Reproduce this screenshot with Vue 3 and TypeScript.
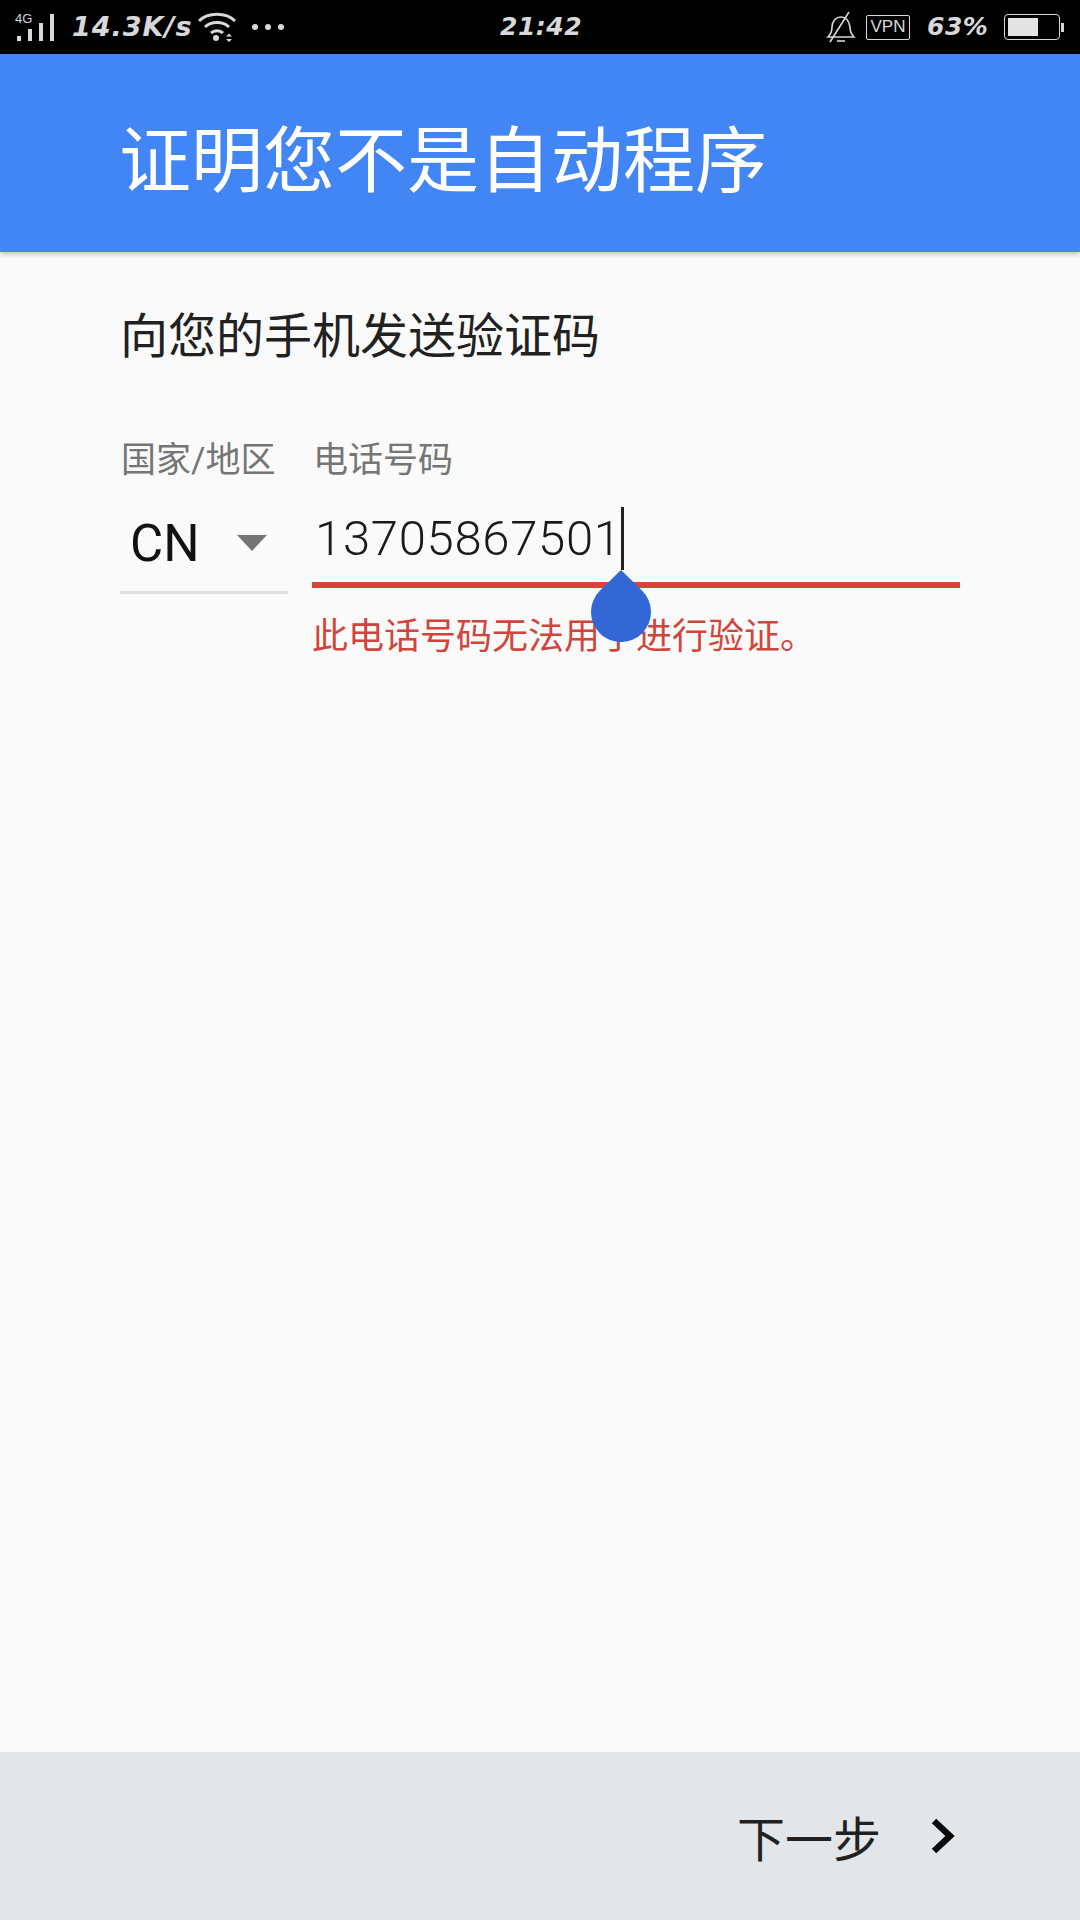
<script setup lang="ts">
const phone = "13705867501";
const signalBars = [5, 12, 18, 27];
</script>

<template>
  <div class="page">
    <div class="status">
      <div class="status-left">
        <div class="signal">
          <span class="net">4G</span>
          <i v-for="h in signalBars" :key="h" class="bar" :style="{ height: h + 'px' }"></i>
        </div>
        <span class="spiky speed">14.3K/s</span>
        <svg class="wifi" width="38" height="30" viewBox="0 0 38 30" fill="none" stroke="#d8d8d8" stroke-width="3">
          <path d="M1 9C10 0 28 0 37 9" />
          <path d="M7 15C13 9 25 9 31 15" />
          <path d="M13 21C16 18 22 18 25 21" />
          <circle cx="18" cy="26" r="3" fill="#d8d8d8" stroke="none" />
          <path d="M28 24.500l3-3 3 3zM28 27l3 3 3-3z" fill="#d8d8d8" stroke="none" />
        </svg>
        <div class="dots"><i></i><i></i><i></i></div>
      </div>
      <span class="spiky clock">21:42</span>
      <div class="status-right">
        <svg class="bell" width="30" height="32" viewBox="0 0 30 32" fill="none" stroke="#d8d8d8" stroke-width="1.6">
          <path d="M2 26c3-3 4-5 4-10 0-6 4-10 9-10s8 4 9 10c0 5 2 8 4 10z" />
          <path d="M11 30h8" />
          <path d="M4 31L23 1" />
        </svg>
        <span class="vpn">VPN</span>
        <span class="spiky pct">63%</span>
        <div class="battery">
          <div class="battery-body"><div class="battery-fill" style="width: 63%"></div></div>
          <i class="battery-tip"></i>
        </div>
      </div>
    </div>

    <header class="appbar">
      <h1>证明您不是自动程序</h1>
    </header>

    <main class="content">
      <p class="subtitle">向您的手机发送验证码</p>
      <div class="form">
        <div class="country">
          <label>国家/地区</label>
          <div class="select">
            <span>CN</span>
            <i class="arrow"></i>
          </div>
        </div>
        <div class="phone">
          <label>电话号码</label>
          <div class="input">
            <span>{{ phone }}</span>
            <i class="caret"></i>
            <svg class="handle" width="60" height="72" viewBox="0 0 60 72">
              <path d="M30 0L51 20.600A30 30 0 1 1 9 20.600Z" fill="#3367d6" />
            </svg>
          </div>
          <p class="error">此电话号码无法用于进行验证。</p>
        </div>
      </div>
    </main>

    <footer class="footer">
      <span>下一步</span>
      <svg width="24" height="36" viewBox="0 0 24 36" fill="none" stroke="#0b0b0b" stroke-width="6.500">
        <path d="M3 3l16 15L3 33" />
      </svg>
    </footer>
  </div>
</template>

<style scoped>
.page {
  display: flex;
  flex-direction: column;
  width: 1080px;
  height: 1920px;
  overflow: hidden;
  background: #fafafa;
  font-family: Roboto, "Noto Sans CJK SC", sans-serif;
}

.status {
  display: flex;
  flex: none;
  align-items: center;
  justify-content: space-between;
  position: relative;
  height: 54px;
  padding: 0 16px 0 17px;
  box-sizing: border-box;
  background: #000;
  color: #d8d8d8;
}

.status-left,
.status-right {
  display: flex;
  align-items: center;
}

.signal {
  display: flex;
  align-items: flex-end;
  gap: 7px;
  position: relative;
  width: 37px;
  height: 27px;
}

.net {
  position: absolute;
  left: -2px;
  top: -1px;
  font-size: 13px;
  line-height: 12px;
  font-family: "Liberation Sans", sans-serif;
}

.bar {
  flex: none;
  width: 4px;
  background: #d8d8d8;
}

.spiky {
  font-family: "DejaVu Sans", sans-serif;
  font-weight: 700;
  font-style: italic;
  font-size: 25px;
  line-height: 30px;
  letter-spacing: 0.5px;
  white-space: nowrap;
}

.speed {
  width: 128px;
  margin-left: 18px;
  font-size: 27px;
  letter-spacing: 1px;
}

.wifi {
  margin-left: -2px;
}

.dots {
  display: flex;
  gap: 7px;
  margin-left: 16px;
}

.dots i {
  width: 6px;
  height: 6px;
  border-radius: 50%;
  background: #d8d8d8;
}

.clock {
  position: absolute;
  left: 500px;
  top: 12px;
}

.bell {
  margin-right: 10px;
}

.vpn {
  width: 44px;
  height: 25px;
  box-sizing: border-box;
  border: 1.5px solid #d8d8d8;
  border-radius: 2px;
  font-family: "Liberation Sans", sans-serif;
  font-size: 17px;
  line-height: 22px;
  text-align: center;
}

.pct {
  width: 62px;
  margin-left: 17px;
}

.battery {
  display: flex;
  align-items: center;
  margin-left: 15px;
}

.battery-body {
  width: 56px;
  height: 26px;
  box-sizing: border-box;
  padding: 3px;
  border: 1.5px solid #d8d8d8;
  border-radius: 4px;
}

.battery-fill {
  height: 100%;
  background: #e4e4e4;
}

.battery-tip {
  width: 3px;
  height: 9px;
  margin-left: 1px;
  background: #d8d8d8;
}

.appbar {
  flex: none;
  position: relative;
  z-index: 1;
  height: 198px;
  padding-left: 119px;
  box-sizing: border-box;
  background: #4285f4;
  box-shadow: 0 2px 5px rgba(0, 0, 0, 0.25);
}

.appbar h1 {
  margin: 0;
  color: #fff;
  font-size: 72px;
  font-weight: 400;
  line-height: 215px;
}

.content {
  flex: 1;
  padding-left: 120px;
}

.subtitle {
  margin: 55px 0 0;
  color: #212121;
  font-size: 48px;
  line-height: 60px;
}

.form {
  display: flex;
  gap: 24px;
  margin-top: 69px;
}

.country {
  width: 168px;
}

label {
  display: block;
  margin-left: 1px;
  padding-top: 4px;
  color: #757575;
  font-size: 35px;
  line-height: 42px;
  white-space: nowrap;
}

.select {
  display: flex;
  align-items: center;
  justify-content: space-between;
  height: 112px;
  padding: 13px 21px 0 10px;
  box-sizing: border-box;
  border-bottom: 3px solid #e0e0e0;
  color: #111;
  font-size: 51px;
}

.arrow {
  width: 0;
  height: 0;
  border-left: 15px solid transparent;
  border-right: 15px solid transparent;
  border-top: 16px solid #757575;
}

.phone {
  width: 648px;
}

.input {
  position: relative;
  height: 106px;
  padding: 13px 0 0 3px;
  box-sizing: border-box;
  border-bottom: 6px solid #db4437;
  color: #1a1a1a;
  font-size: 49px;
  font-weight: 300;
  letter-spacing: 0.7px;
  line-height: 87px;
}

.caret {
  position: absolute;
  left: 309px;
  top: 25px;
  width: 3px;
  height: 63px;
  background: #212121;
}

.handle {
  position: absolute;
  left: 279px;
  top: 88px;
}

.error {
  margin: 26px 0 0;
  color: #d2453b;
  font-size: 36px;
  line-height: 46px;
  white-space: nowrap;
}

.footer {
  display: flex;
  flex: none;
  align-items: center;
  justify-content: flex-end;
  gap: 50px;
  height: 168px;
  padding-right: 125px;
  box-sizing: border-box;
  background: #e2e6e9;
  color: #212121;
  font-size: 48px;
}
</style>
